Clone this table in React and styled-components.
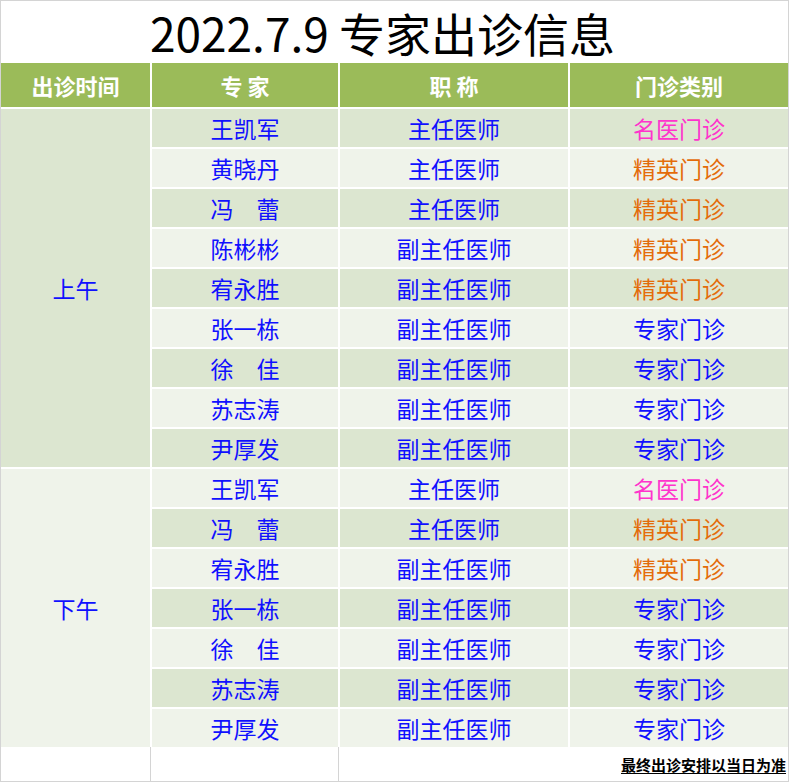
import React from 'react';
import styled, { createGlobalStyle } from 'styled-components';

const GlobalStyle = createGlobalStyle`
  html, body {
    margin: 0;
    padding: 0;
    background: #ffffff;
  }
  body {
    font-family: 'Noto Sans CJK SC', 'Noto Sans', sans-serif;
  }
`;

const colors = {
  dark: '#dce6d0',
  light: '#eff3ea',
  green: '#9bbb59',
  blue: '#1010ff',
  pink: '#ff33cc',
  orange: '#e46c0a',
  line: '#d4d4d4',
};

const typeColor = {
  名医门诊: colors.pink,
  精英门诊: colors.orange,
  专家门诊: colors.blue,
};

const Page = styled.div`
  width: 789px;
  height: 782px;
  box-sizing: border-box;
  border: 1px solid ${colors.line};
  display: flex;
  flex-direction: column;
  background: #ffffff;
`;

const Title = styled.h1`
  height: 62px;
  margin: 0;
  padding-right: 24px;
  display: flex;
  align-items: center;
  justify-content: center;
  font-size: 46px;
  font-weight: 400;
  color: #000000;
  line-height: 1;
`;

const Table = styled.div`
  display: grid;
  grid-template-columns: 149px 186px 228px 1fr;
  grid-template-rows: 44px repeat(16, 38px);
  gap: 2px;
  background: #ffffff;
`;

const HeadCell = styled.div`
  background: ${colors.green};
  color: #ffffff;
  font-size: 22px;
  font-weight: 700;
  display: flex;
  align-items: center;
  justify-content: center;
  white-space: pre;
`;

const Cell = styled.div`
  background: ${(p) => (p.$dark ? colors.dark : colors.light)};
  color: ${(p) => p.$color || colors.blue};
  font-size: 23px;
  display: flex;
  align-items: center;
  justify-content: center;
  white-space: pre;
  grid-row: ${(p) => (p.$span ? `span ${p.$span}` : 'auto')};
`;

const Footer = styled.div`
  flex: 1;
  display: grid;
  grid-template-columns: 150px 188px 1fr;
`;

const FootCell = styled.div`
  border-right: ${(p) => (p.$last ? 'none' : `1px solid ${colors.line}`)};
  display: flex;
  align-items: center;
  justify-content: flex-end;
  padding-right: 2px;
`;

const Note = styled.span`
  font-size: 15px;
  font-weight: 700;
  color: #000000;
  text-decoration: underline;
  text-underline-offset: 2px;
`;

const morning = [
  ['王凯军', '主任医师', '名医门诊'],
  ['黄晓丹', '主任医师', '精英门诊'],
  ['冯　蕾', '主任医师', '精英门诊'],
  ['陈彬彬', '副主任医师', '精英门诊'],
  ['宥永胜', '副主任医师', '精英门诊'],
  ['张一栋', '副主任医师', '专家门诊'],
  ['徐　佳', '副主任医师', '专家门诊'],
  ['苏志涛', '副主任医师', '专家门诊'],
  ['尹厚发', '副主任医师', '专家门诊'],
];

const afternoon = [
  ['王凯军', '主任医师', '名医门诊'],
  ['冯　蕾', '主任医师', '精英门诊'],
  ['宥永胜', '副主任医师', '精英门诊'],
  ['张一栋', '副主任医师', '专家门诊'],
  ['徐　佳', '副主任医师', '专家门诊'],
  ['苏志涛', '副主任医师', '专家门诊'],
  ['尹厚发', '副主任医师', '专家门诊'],
];

function Rows({ rows, offset }) {
  return rows.map(([name, title, type], i) => {
    const dark = (offset + i) % 2 === 0;
    return (
      <React.Fragment key={offset + i}>
        <Cell $dark={dark}>{name}</Cell>
        <Cell $dark={dark}>{title}</Cell>
        <Cell $dark={dark} $color={typeColor[type]}>
          {type}
        </Cell>
      </React.Fragment>
    );
  });
}

export default function App() {
  return (
    <>
      <GlobalStyle />
      <Page>
        <Title>2022.7.9 专家出诊信息</Title>
        <Table>
          <HeadCell>出诊时间</HeadCell>
          <HeadCell>专 家</HeadCell>
          <HeadCell>职 称</HeadCell>
          <HeadCell>门诊类别</HeadCell>

          <Cell $dark $span={morning.length}>
            上午
          </Cell>
          <Rows rows={morning} offset={0} />

          <Cell $span={afternoon.length}>下午</Cell>
          <Rows rows={afternoon} offset={morning.length} />
        </Table>
        <Footer>
          <FootCell />
          <FootCell />
          <FootCell $last>
            <Note>最终出诊安排以当日为准</Note>
          </FootCell>
        </Footer>
      </Page>
    </>
  );
}
